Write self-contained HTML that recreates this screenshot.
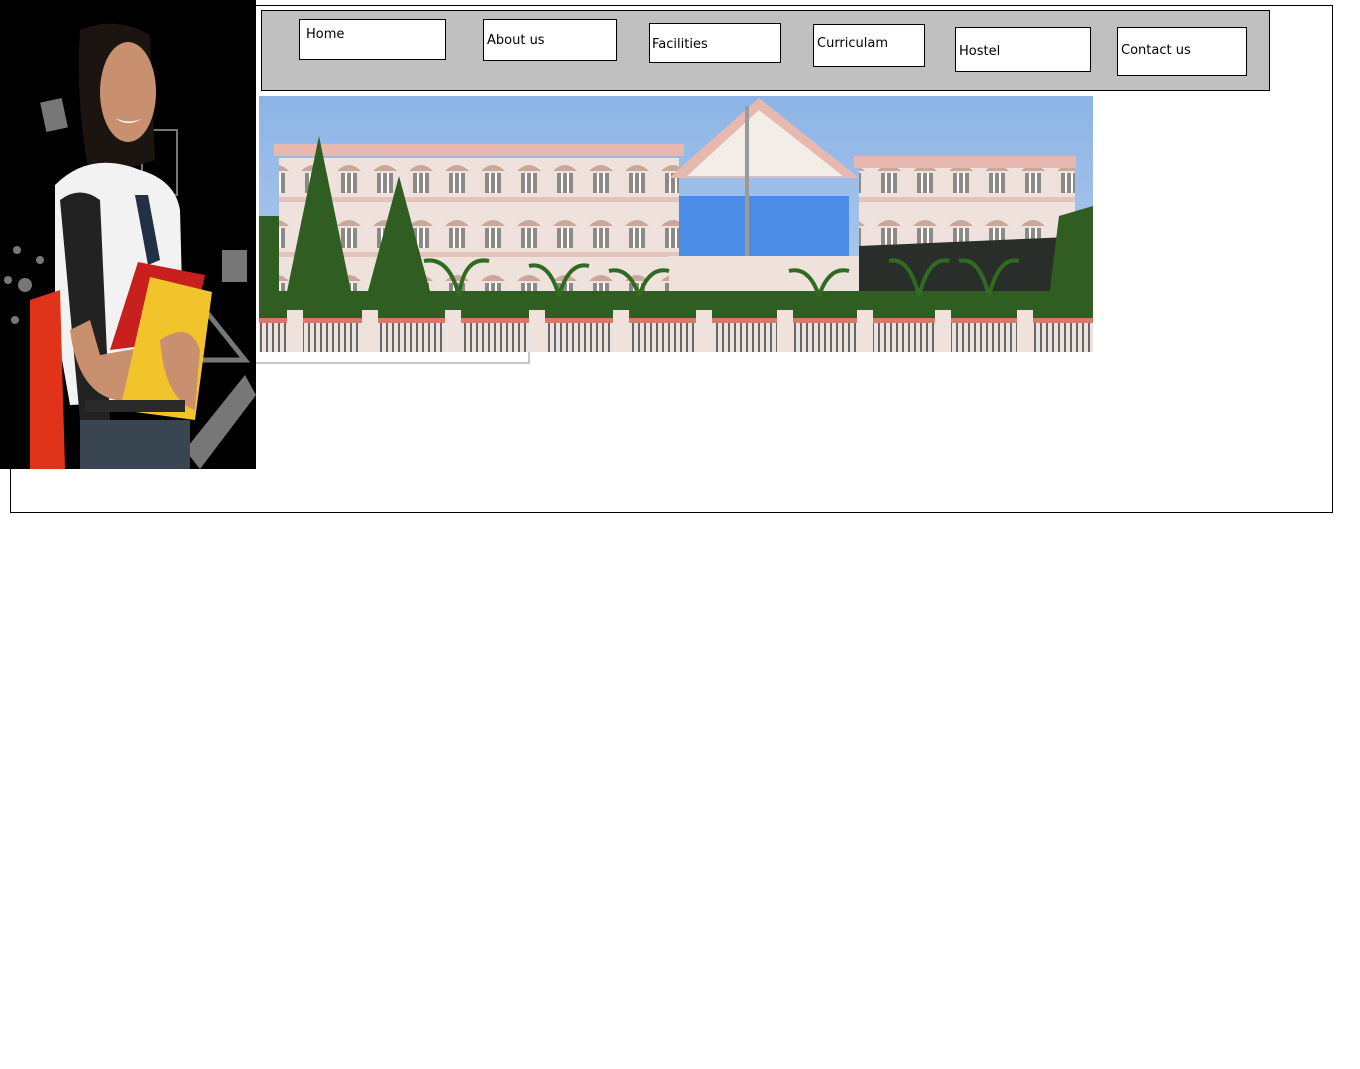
<!DOCTYPE html>
<html><head><meta charset="utf-8"><style>
body{margin:0;width:1360px;height:1069px;background:#fff;position:relative;overflow:hidden;font-family:"DejaVu Sans","Liberation Sans",sans-serif;}
.a{position:absolute;}
.btn{position:absolute;background:#fff;border:1px solid #000;box-sizing:border-box;font-size:13px;color:#000;}
</style></head><body>
<div class="a" style="left:10px;top:5px;width:1323px;height:508px;border:1px solid #000;box-sizing:border-box"></div>
<div class="a" style="left:261px;top:10px;width:1009px;height:81px;background:#c0c0c0;border:1px solid #000;box-sizing:border-box"></div>
<div class="btn" style="left:299px;top:19px;width:147px;height:41px;padding:7px 0 0 6px">Home</div>
<div class="btn" style="left:483px;top:19px;width:134px;height:42px;padding:13px 0 0 3px">About us</div>
<div class="btn" style="left:649px;top:23px;width:132px;height:40px;padding:13px 0 0 2px">Facilities</div>
<div class="btn" style="left:813px;top:24px;width:112px;height:43px;padding:11px 0 0 3px">Curriculam</div>
<div class="btn" style="left:955px;top:27px;width:136px;height:45px;padding:16px 0 0 3px">Hostel</div>
<div class="btn" style="left:1117px;top:27px;width:130px;height:49px;padding:15px 0 0 3px">Contact us</div>
<div class="a" style="left:256px;top:351px;width:272px;height:11px;border-right:2px solid #c8c8c8;border-bottom:2px solid #c8c8c8"></div>
<svg class="a" style="left:259px;top:96px" width="834" height="256" viewBox="0 0 834 256">
<defs><linearGradient id="sk" x1="0" y1="0" x2="0" y2="1"><stop offset="0" stop-color="#8db4e6"/><stop offset="1" stop-color="#b7d0ee"/></linearGradient>
<pattern id="win" width="36" height="55" patternUnits="userSpaceOnUse"><rect width="36" height="55" fill="#efe2dc"/><path d="M6 20 Q18 8 30 20 Z" fill="#c9a79c"/><rect x="10" y="22" width="16" height="20" fill="#8d8a86"/><rect x="14" y="22" width="2" height="20" fill="#fff"/><rect x="20" y="22" width="2" height="20" fill="#fff"/><rect x="0" y="46" width="36" height="5" fill="#e3c4bb"/></pattern>
<pattern id="fen" width="6" height="30" patternUnits="userSpaceOnUse"><rect width="6" height="30" fill="#e8e2e0"/><rect x="1" width="2" height="30" fill="#6d6660"/></pattern></defs>
<rect width="834" height="256" fill="url(#sk)"/>
<rect x="20" y="62" width="400" height="165" fill="url(#win)"/>
<rect x="15" y="48" width="410" height="12" fill="#e6b8b0"/>
<rect x="600" y="72" width="216" height="150" fill="url(#win)"/>
<rect x="595" y="60" width="222" height="12" fill="#e6b8b0"/>
<polygon points="410,82 500,2 600,82" fill="#e6b8b0"/>
<polygon points="428,80 500,14 584,80" fill="#f4ece6"/>
<rect x="420" y="100" width="170" height="60" fill="#4b8ce6"/>
<rect x="486" y="10" width="4" height="220" fill="#9a9a9a"/>
<rect x="410" y="160" width="195" height="60" fill="#efe2dc"/>
<polygon points="600,150 834,140 834,230 600,230" fill="#2a2e2a"/>
<g fill="#2f5d22">
<polygon points="60,40 95,210 25,210"/><polygon points="140,80 175,210 105,210"/>
<rect x="0" y="195" width="834" height="30"/><rect x="0" y="120" width="20" height="100"/>
<polygon points="800,120 834,110 834,200 790,200"/>
</g>
<g stroke="#2f6b20" stroke-width="4" fill="none">
<path d="M200 200 Q190 160 165 165 M200 200 Q205 160 230 165"/><path d="M300 200 Q290 165 270 170 M300 200 Q310 165 330 170"/><path d="M380 200 Q370 170 350 175 M380 200 Q390 170 410 175"/><path d="M660 200 Q650 160 630 165 M660 200 Q670 160 690 165"/><path d="M730 200 Q720 160 700 165 M730 200 Q740 160 760 165"/><path d="M560 200 Q550 170 530 175 M560 200 Q570 170 590 175"/>
</g>
<rect x="0" y="222" width="834" height="34" fill="url(#fen)"/>
<rect x="0" y="222" width="834" height="5" fill="#d6786a"/>
<g fill="#efe2dc"><rect x="28" y="214" width="16" height="42"/><rect x="103" y="214" width="16" height="42"/><rect x="186" y="214" width="16" height="42"/><rect x="270" y="214" width="16" height="42"/><rect x="354" y="214" width="16" height="42"/><rect x="437" y="214" width="16" height="42"/><rect x="518" y="214" width="16" height="42"/><rect x="598" y="214" width="16" height="42"/><rect x="676" y="214" width="16" height="42"/><rect x="758" y="214" width="16" height="42"/></g>
</svg>
<svg class="a" style="left:0;top:0" width="256" height="469" viewBox="0 0 256 469">
<rect width="256" height="469" fill="#000"/>
<g fill="#777"><rect x="43" y="100" width="22" height="30" transform="rotate(-12 54 115)"/><rect x="222" y="250" width="25" height="32"/><polygon points="205,310 245,360 200,360" fill="none" stroke="#777" stroke-width="5"/><polygon points="185,450 245,375 256,395 200,469" /><circle cx="25" cy="285" r="7"/><circle cx="8" cy="280" r="4"/><circle cx="17" cy="250" r="4"/><circle cx="40" cy="260" r="4"/><circle cx="15" cy="320" r="4"/></g>
<rect x="142" y="130" width="35" height="65" fill="none" stroke="#777" stroke-width="2"/>
<path d="M80 30 Q115 15 150 35 L155 160 L90 180 Q75 100 80 30Z" fill="#1c1410"/>
<ellipse cx="128" cy="92" rx="28" ry="50" fill="#c8906e"/>
<path d="M115 118 Q128 128 143 118 Q130 125 115 118Z" fill="#fff"/>
<path d="M55 185 Q90 150 140 170 Q175 180 180 210 L185 400 L70 405 L55 320Z" fill="#f2f2f2"/>
<path d="M60 200 Q80 185 100 200 L110 420 L80 420 Z" fill="#222"/>
<path d="M30 300 L60 290 L65 469 L30 469Z" fill="#e0331a"/>
<path d="M135 195 L148 195 L160 260 L148 265Z" fill="#223045"/>
<path d="M70 330 Q80 410 140 400 L190 380 L185 340 L100 355 L90 320Z" fill="#c8906e"/>
<polygon points="138,262 205,275 190,340 110,350" fill="#c8201e"/>
<polygon points="150,277 212,292 195,420 120,410" fill="#f2c42c"/>
<path d="M160 340 Q190 320 200 350 L195 410 Q165 400 160 340Z" fill="#c8906e"/>
<rect x="80" y="420" width="110" height="49" fill="#3a4552"/>
<rect x="85" y="400" width="100" height="12" fill="#2a2a2a"/>
</svg>
</body></html>
